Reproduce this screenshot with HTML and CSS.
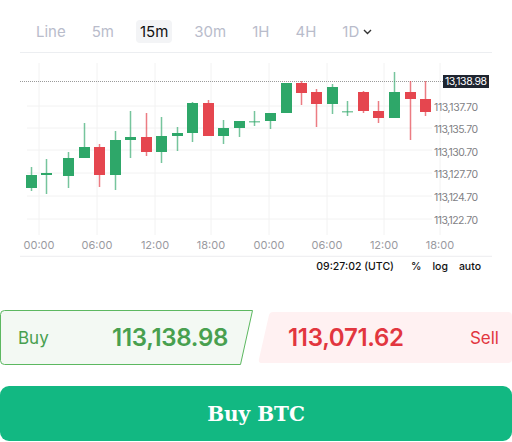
FILE: index.html
```html
<!DOCTYPE html>
<html>
<head>
  <title>BTC chart</title>
  <link rel="stylesheet" href="styles.css">
</head>
<body>
  <div class="page">
    <div class="tabs">
      <span class="tab">Line</span>
      <span class="tab">5m</span>
      <span class="tab cur">15m</span>
      <span class="tab">30m</span>
      <span class="tab">1H</span>
      <span class="tab">4H</span>
      <span class="tab">1D<svg class="chev" width="9" height="6" viewBox="0 0 9 6"><path d="M1 1l3.5 3.5L8 1" fill="none" stroke="#333" stroke-width="1.4"/></svg></span>
    </div>

    <svg class="chart" width="512" height="204" viewBox="0 54 512 204">
      <g class="grid">
        <line x1="39" y1="64" x2="39" y2="236"/>
        <line x1="97" y1="64" x2="97" y2="236"/>
        <line x1="155" y1="64" x2="155" y2="236"/>
        <line x1="211" y1="64" x2="211" y2="236"/>
        <line x1="269" y1="64" x2="269" y2="236"/>
        <line x1="327" y1="64" x2="327" y2="236"/>
        <line x1="384" y1="64" x2="384" y2="236"/>
        <line x1="440" y1="64" x2="440" y2="236"/>
        <line x1="27" y1="107" x2="432" y2="107"/>
        <line x1="27" y1="129" x2="432" y2="129"/>
        <line x1="27" y1="151" x2="432" y2="151"/>
        <line x1="27" y1="174" x2="432" y2="174"/>
        <line x1="27" y1="197" x2="432" y2="197"/>
        <line x1="27" y1="220" x2="432" y2="220"/>
      </g>
      <line class="last" x1="20" y1="82.5" x2="443" y2="82.5"/>

      <!-- candles: wick then body -->
      <g class="up">
        <line x1="31.5" y1="168" x2="31.5" y2="192"/><rect x="26" y="176" width="11" height="13"/>
        <line x1="46.5" y1="160" x2="46.5" y2="195"/><rect x="41" y="174" width="11" height="2"/>
        <line x1="68.5" y1="153" x2="68.5" y2="189"/><rect x="63" y="159" width="11" height="18"/>
        <line x1="84.5" y1="124" x2="84.5" y2="159"/><rect x="79" y="148" width="11" height="11"/>
        <line x1="115.5" y1="132" x2="115.5" y2="191"/><rect x="110" y="141" width="11" height="35"/>
        <line x1="130.5" y1="112" x2="130.5" y2="159"/><rect x="125" y="138" width="11" height="3"/>
        <line x1="161.5" y1="118" x2="161.5" y2="164"/><rect x="156" y="137" width="11" height="16"/>
        <line x1="177.5" y1="128" x2="177.5" y2="152"/><rect x="172" y="134" width="11" height="3"/>
        <line x1="192.5" y1="103" x2="192.5" y2="143"/><rect x="187" y="104" width="11" height="30"/>
        <line x1="223.5" y1="121" x2="223.5" y2="145"/><rect x="218" y="129" width="11" height="8"/>
        <line x1="239.5" y1="122" x2="239.5" y2="138"/><rect x="234" y="122" width="11" height="7"/>
        <line x1="254.5" y1="112" x2="254.5" y2="127"/><rect class="doji" x="249" y="122" width="11" height="1.5"/>
        <line x1="270.5" y1="114" x2="270.5" y2="130"/><rect x="265" y="114" width="11" height="8"/>
        <rect x="281" y="84" width="11" height="30"/>
        <line x1="332.5" y1="85" x2="332.5" y2="115"/><rect x="327" y="88" width="11" height="17"/>
        <line x1="347.5" y1="102" x2="347.5" y2="117"/><rect class="doji" x="342" y="112" width="11" height="1.5"/>
        <line x1="394.5" y1="73" x2="394.5" y2="119"/><rect x="389" y="93" width="11" height="26"/>
      </g>
      <g class="down">
        <line x1="99.5" y1="145" x2="99.5" y2="188"/><rect x="94" y="148" width="11" height="28"/>
        <line x1="146.5" y1="114" x2="146.5" y2="157"/><rect x="141" y="138" width="11" height="15"/>
        <line x1="208.5" y1="101" x2="208.5" y2="137"/><rect x="203" y="104" width="11" height="33"/>
        <line x1="301.5" y1="82" x2="301.5" y2="106"/><rect x="296" y="84" width="11" height="10"/>
        <line x1="316.5" y1="90" x2="316.5" y2="128"/><rect x="311" y="93" width="11" height="12"/>
        <line x1="363.5" y1="92" x2="363.5" y2="114"/><rect x="358" y="93" width="11" height="19"/>
        <line x1="378.5" y1="102" x2="378.5" y2="124"/><rect x="373" y="112" width="11" height="7"/>
        <line x1="410.5" y1="82" x2="410.5" y2="141"/><rect x="405" y="93" width="11" height="7"/>
        <line x1="425.5" y1="82" x2="425.5" y2="117"/><rect x="420" y="100" width="11" height="13"/>
      </g>

      <g class="price">
        <text x="434" y="112" textLength="44">113,137.70</text>
        <text x="434" y="134" textLength="44">113,135.70</text>
        <text x="434" y="157" textLength="44">113,130.70</text>
        <text x="434" y="179" textLength="44">113,127.70</text>
        <text x="434" y="202" textLength="44">113,124.70</text>
        <text x="434" y="225" textLength="44">113,122.70</text>
      </g>
      <rect class="tag" x="443" y="76" width="46" height="13"/>
      <text class="tagtext" x="445" y="86" textLength="42">13,138.98</text>

      <g class="time">
        <text x="39" y="249">00:00</text>
        <text x="97" y="249">06:00</text>
        <text x="155" y="249">12:00</text>
        <text x="211" y="249">18:00</text>
        <text x="269" y="249">00:00</text>
        <text x="327" y="249">06:00</text>
        <text x="384" y="249">12:00</text>
        <text x="440" y="249">18:00</text>
      </g>
      <line class="base" x1="20" y1="257.5" x2="492" y2="257.5"/>
    </svg>

    <div class="status">
      <span class="clock">09:27:02 (UTC)</span>
      <span>%</span>
      <span>log</span>
      <span>auto</span>
    </div>

    <div class="quotes">
      <div class="quote buy">
        <svg class="shape" width="254" height="55" viewBox="0 0 254 55">
          <path d="M4.5 0.5H252.5L240.5 54.5H4.5Q0.5 54.5 0.5 50.5V4.5Q0.5 0.5 4.5 0.5Z" fill="#f3f9f3" stroke="#5cb860"/>
        </svg>
        <span class="side">Buy</span>
        <span class="num">113,138.98</span>
      </div>
      <div class="quote sell">
        <svg class="shape" width="254" height="51" viewBox="0 0 254 51">
          <path d="M15 0H250Q254 0 254 4V47Q254 51 250 51H4Q0 51 1 47L11 3Q12 0 15 0Z" fill="#fff1f2"/>
        </svg>
        <span class="num">113,071.62</span>
        <span class="side">Sell</span>
      </div>
    </div>

    <button class="cta">Buy BTC</button>
  </div>
</body>
</html>
```

FILE: styles.css
```css
body{
  margin:0;
  background:#fff;
  font-family:"Inter","Noto Sans",sans-serif;
}
.page{
  width:512px;
  height:442px;
  overflow:hidden;
}
.tabs{
  display:flex;
  align-items:center;
  gap:18px;
  height:52px;
  margin:0 20px;
  padding-left:12px;
  border-bottom:1px solid #eceef1;
}
.tab{
  display:flex;
  align-items:center;
  gap:4px;
  height:23px;
  padding:0 4px;
  margin-top:10px;
  border-radius:4px;
  font-size:15px;
  color:#b9bccb;
}
.tab.cur{
  background:#f3f4f6;
  color:#111;
}
.chev{
  margin-top:1px;
}
.chart{
  display:block;
}
.grid line{
  stroke:#f2f2f2;
  stroke-width:1;
}
.last{
  stroke:#9a9a9a;
  stroke-width:1;
  stroke-dasharray:1 1;
}
.up rect{ fill:#2ea769; }
.up line{ stroke:#2ea769; stroke-width:1.5; opacity:.65; }
.down rect{ fill:#e5464f; }
.down line{ stroke:#e5464f; stroke-width:1.5; opacity:.7; }
.up rect.doji{ opacity:.6; }
.price text{
  font-size:10.5px;
  fill:#7f7f85;
}
.tag{ fill:#1f2530; }
.tagtext{
  font-size:10.5px;
  fill:#fff;
}
.time text{
  font-size:11px;
  fill:#9a9a9f;
  text-anchor:middle;
}
.time{
  transform:translateY(1px);
}
.base{
  stroke:#f0f0f2;
  stroke-width:1.5;
}
.status{
  display:flex;
  justify-content:flex-end;
  gap:11px;
  height:20px;
  padding-right:31px;
  font-size:10.5px;
  font-weight:500;
  color:#111;
  line-height:20px;
}
.status .clock{
  margin-right:6px;
}
.quotes{
  display:flex;
  align-items:center;
  gap:4px;
  height:55px;
  margin-top:33px;
}
.quote{
  position:relative;
  display:flex;
  align-items:center;
  justify-content:space-between;
  width:254px;
}
.quote .shape{
  position:absolute;
  left:0;
  top:0;
}
.quote span{
  position:relative;
}
.buy{
  height:55px;
  padding:0 26px 0 18px;
  box-sizing:border-box;
  color:#48a04f;
}
.sell{
  height:51px;
  padding:0 13px 0 30px;
  box-sizing:border-box;
  color:#e2363f;
}
.side{
  font-size:17px;
}
.num{
  font-size:24px;
  font-weight:600;
  letter-spacing:-0.3px;
}
.cta{
  display:block;
  width:512px;
  height:55px;
  margin-top:21px;
  border:0;
  border-radius:9px;
  background:#12b882;
  color:#fff;
  font-family:"DejaVu Serif",serif;
  font-weight:bold;
  font-size:20px;
}
```
